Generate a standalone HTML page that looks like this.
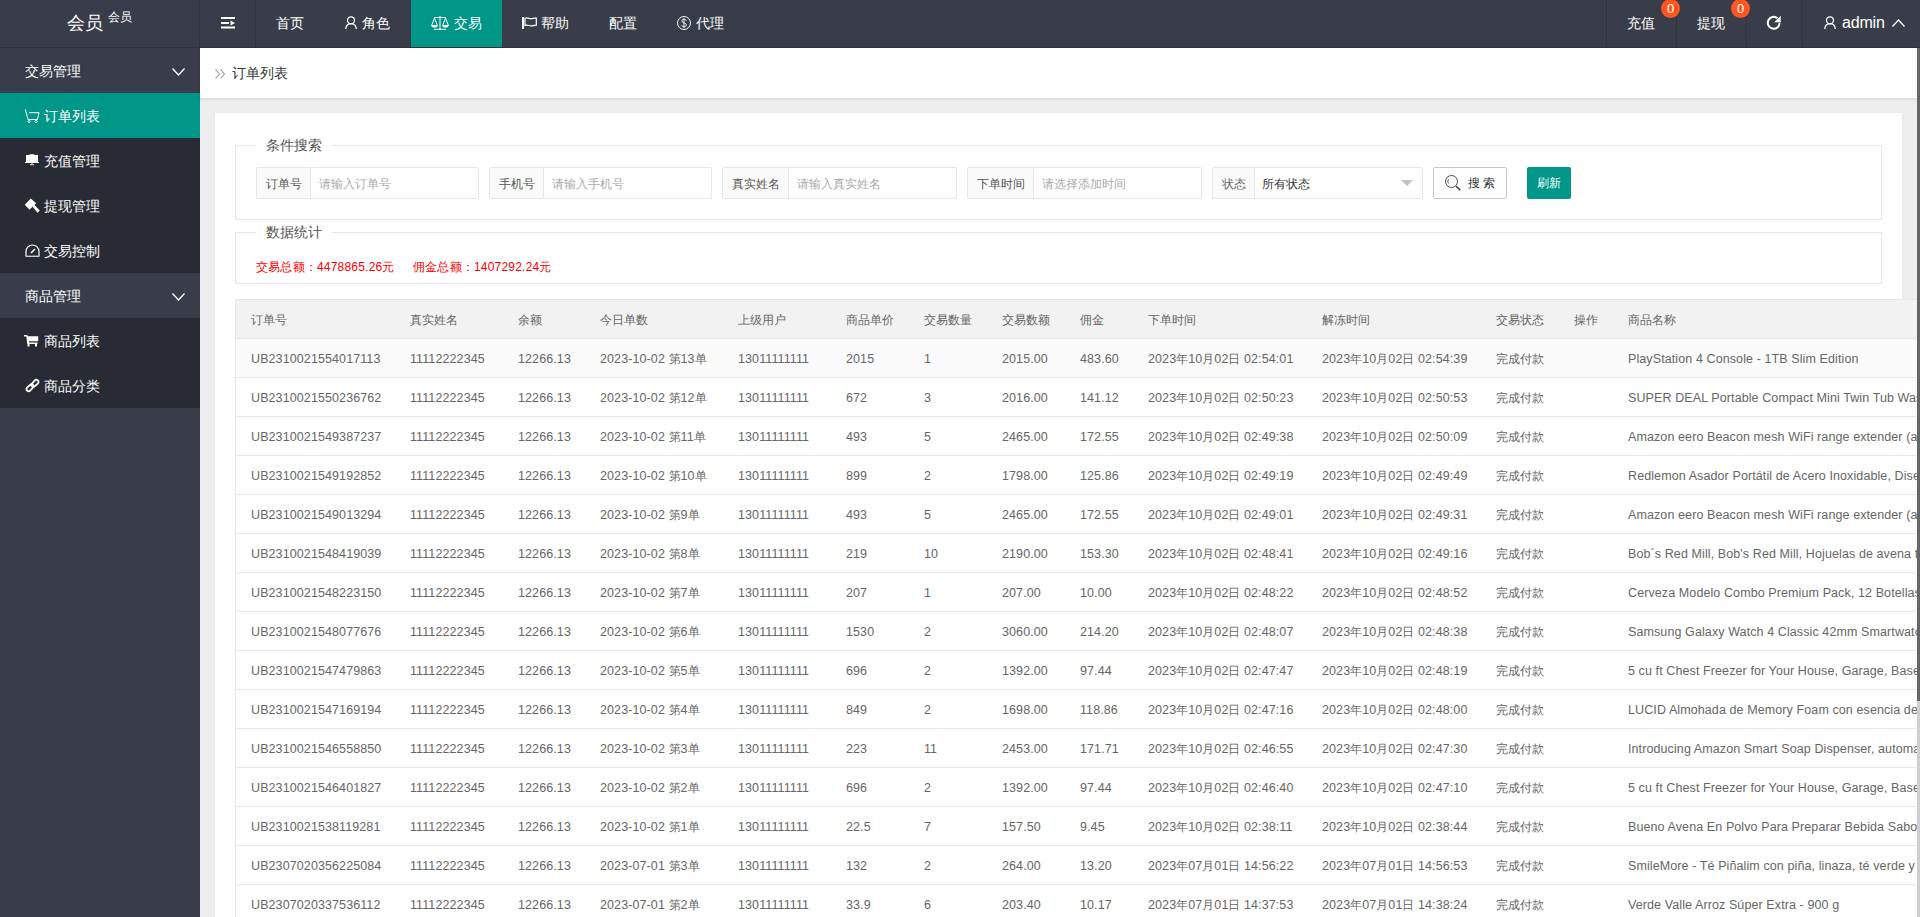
<!DOCTYPE html>
<html><head><meta charset="utf-8">
<style>
*{box-sizing:border-box;margin:0;padding:0}
html,body{width:1920px;height:917px;overflow:hidden}
body{font-family:"Liberation Sans",sans-serif;font-size:14px;color:#666;background:#eee;position:relative}
svg{position:absolute;display:block;overflow:visible}
#hdr{position:absolute;left:0;top:0;width:1920px;height:48px;background:#393D49;color:#fff}
#hdr .bb{position:absolute;left:0;top:47px;width:1920px;height:1px;background:#30333d}
.logo{position:absolute;left:0;top:0;width:200px;height:47px}
.logo .big{position:absolute;left:67px;top:11px;font-size:18px;line-height:24px}
.logo .sm{position:absolute;left:108px;top:9px;font-size:12px;line-height:16px}
.sep{position:absolute;top:0;width:1px;height:47px;background:#30333d}
.nav{position:absolute;top:0;height:48px;line-height:46px;font-size:14px;color:#fff;white-space:nowrap}
.navact{position:absolute;left:411px;top:0;width:91px;height:48px;background:#009688}
.badge{position:absolute;top:-1px;width:19px;height:19px;border-radius:50%;background:#FF5722;color:#fff;font-size:13px;line-height:20px;text-align:center}
#side{position:absolute;left:0;top:48px;width:200px;height:869px;background:#393D49}
.sitem{position:absolute;left:0;width:200px;height:45px;color:#fff;font-size:14px;line-height:45px;white-space:nowrap}
.sitem.child{background:#282B33}
.sitem.act{background:#009688}
.sitem .tx{position:absolute;left:44px;top:1px}
.sitem.grp .tx{left:25px}
#bread{position:absolute;left:200px;top:48px;width:1717px;height:50px;background:#fff;box-shadow:0 1px 3px rgba(0,0,0,.12)}
#bread .tx{position:absolute;left:32px;top:0;line-height:50px;font-size:14px;color:#333}
#card{position:absolute;left:215px;top:113px;width:1687px;height:900px;background:#fff;box-shadow:0 0 2px rgba(0,0,0,.06)}
#rscroll{position:absolute;left:1917px;top:48px;width:3px;height:653px;background:#666}
#rtrack{position:absolute;left:1917px;top:701px;width:3px;height:216px;background:#cfcfcf}
.fs{position:absolute;left:235px;width:1647px;border:1px solid #e6e6e6}
.legend{position:absolute;left:256px;height:20px;padding:0 10px;background:#fff;font-size:14px;line-height:21px;color:#555}
.ig{position:absolute;top:167px;height:32px;border:1px solid #e6e6e6;border-radius:2px;background:#fff}
.ig .lb{position:absolute;left:0;top:0;height:30px;background:#FAFAFA;border-right:1px solid #e6e6e6;font-size:12px;line-height:32px;color:#555;padding-left:9px;white-space:nowrap}
.ig .ph{position:absolute;top:0;line-height:32px;font-size:12px;color:#aaa;white-space:nowrap}
.btn1{position:absolute;left:1433px;top:167px;width:74px;height:32px;border:1px solid #C9C9C9;border-radius:2px;background:#fff;font-size:12px;color:#333;line-height:30px}
.btn2{position:absolute;left:1527px;top:167px;width:44px;height:32px;border-radius:2px;background:#009688;color:#fff;font-size:12px;line-height:32px;text-align:center}
.stat{position:absolute;top:259px;font-size:12px;line-height:16px;color:#FF0000;white-space:nowrap;letter-spacing:.2px}
#tbl{position:absolute;left:235px;top:299px;width:1682px;height:640px;border-left:1px solid #e6e6e6;border-top:1px solid #e6e6e6;overflow:hidden}
.thead{position:absolute;left:0;top:0;width:1700px;height:39px;background:#F2F2F2;border-bottom:1px solid #e6e6e6}
.tr{position:absolute;left:0;width:1700px;height:39px;background:#fff;border-bottom:1px solid #e6e6e6}
.tr.hov{background:#FBFBFB}
.c{position:absolute;top:1px;line-height:38px;font-size:12.5px;letter-spacing:.1px;color:#666;white-space:nowrap}
.c i{font-style:normal;font-size:12px;letter-spacing:0}
.c.h{font-size:12px;letter-spacing:0}
</style></head><body>
<div id="hdr">
  <div class="logo"><span class="big">会员</span><span class="sm">会员</span></div>
  <div class="sep" style="left:199px"></div>
  <div class="sep" style="left:255px"></div>
  <!-- hamburger -->
  <svg style="left:221px;top:16px" width="14" height="13" viewBox="0 0 14 13">
    <rect x="0" y="1" width="14" height="2" fill="#fff"/>
    <rect x="0" y="6" width="8" height="2" fill="#fff"/>
    <path d="M9.5 4.5 L14 7 L9.5 9.5Z" fill="#fff"/>
    <rect x="0" y="10.5" width="14" height="2" fill="#fff"/>
  </svg>
  <div class="navact"></div>
  <div class="nav" style="left:276px">首页</div>
  <svg style="left:345px;top:16px" width="12" height="13" viewBox="0 0 12 13" fill="none" stroke="#fff" stroke-width="1.3">
    <circle cx="6" cy="4.3" r="3.5"/>
    <path d="M0.8 13 C0.8 9.5 3 7.6 6 7.6 C9 7.6 11.2 9.5 11.2 13"/>
  </svg>
  <div class="nav" style="left:362px">角色</div>
  <svg style="left:431px;top:16px" width="18" height="14" viewBox="0 0 18 14" fill="none" stroke="#fff" stroke-width="1">
    <path d="M3 1.5 H15 M9 1.5 V13.3 M3 13.3 H15"/>
    <path d="M3.5 2.2 L0.7 9.2 M3.5 2.2 L6.3 9.2 M14.5 2.2 L11.7 9.2 M14.5 2.2 L17.3 9.2"/>
    <path d="M0.2 9 H6.8 C6.6 11 5.2 11.6 3.5 11.6 C1.8 11.6 0.4 11 0.2 9Z M11.2 9 H17.8 C17.6 11 16.2 11.6 14.5 11.6 C12.8 11.6 11.4 11 11.2 9Z" fill="#fff" stroke="none"/>
    <circle cx="9" cy="1.3" r="1.1" fill="#fff" stroke="none"/>
  </svg>
  <div class="nav" style="left:454px">交易</div>
  <svg style="left:522px;top:17px" width="15" height="12" viewBox="0 0 15 12" fill="none" stroke="#fff" stroke-width="1.2">
    <path d="M1 0 V12" stroke-width="2"/>
    <path d="M3 1.2 C5.5 0.2 7.5 2.2 10 1.6 C11.5 1.3 12.5 0.9 14.3 1 V8.2 C12.5 8.1 11.5 8.5 10 8.8 C7.5 9.4 5.5 7.4 3 8.4Z"/>
  </svg>
  <div class="nav" style="left:541px">帮助</div>
  <div class="nav" style="left:609px">配置</div>
  <svg style="left:677px;top:16px" width="14" height="14" viewBox="0 0 14 14" fill="none" stroke="#fff" stroke-width="1">
    <circle cx="7" cy="7" r="6.5"/>
    <path d="M9.2 4.6 C8.8 3.6 8 3.3 7 3.3 C5.7 3.3 4.9 4 4.9 5 C4.9 7.4 9.3 6.4 9.3 8.9 C9.3 10 8.4 10.7 7 10.7 C5.8 10.7 5 10.2 4.7 9.2"/>
    <path d="M7 2 V12" stroke-width="0.8"/>
  </svg>
  <div class="nav" style="left:696px">代理</div>

  <div class="sep" style="left:1606px"></div>
  <div class="sep" style="left:1676px"></div>
  <div class="sep" style="left:1746px"></div>
  <div class="sep" style="left:1802px"></div>
  <div class="nav" style="left:1627px">充值</div>
  <div class="badge" style="left:1661px">0</div>
  <div class="nav" style="left:1697px">提现</div>
  <div class="badge" style="left:1731px">0</div>
  <svg style="left:1767px;top:16px" width="14" height="14" viewBox="0 0 14 14" fill="none" stroke="#fff" stroke-width="2">
    <path d="M12.6 6.8 A5.9 5.9 0 1 1 10.4 2.2"/>
    <path d="M13.7 -0.2 L13.7 6.3 L7.2 6.3Z" fill="#fff" stroke="none"/>
  </svg>
  <svg style="left:1824px;top:16px" width="12" height="13" viewBox="0 0 12 13" fill="none" stroke="#fff" stroke-width="1.3">
    <circle cx="6" cy="4.3" r="3.5"/>
    <path d="M0.8 13 C0.8 9.5 3 7.6 6 7.6 C9 7.6 11.2 9.5 11.2 13"/>
  </svg>
  <div class="nav" style="left:1842px;font-size:16px;letter-spacing:-.2px;line-height:45px">admin</div>
  <svg style="left:1892px;top:19px" width="13" height="8" viewBox="0 0 13 8" fill="none" stroke="#fff" stroke-width="1.3">
    <path d="M0.5 7.5 L6.5 1 L12.5 7.5"/>
  </svg>
  <div class="bb"></div>
</div>

<div id="side">
  <div class="sitem grp" style="top:0"><span class="tx">交易管理</span>
    <svg style="left:172px;top:20px" width="13" height="8" viewBox="0 0 13 8" fill="none" stroke="#fff" stroke-width="1.3"><path d="M0.5 0.5 L6.5 7 L12.5 0.5"/></svg>
  </div>
  <div class="sitem child act" style="top:45px"><span class="tx">订单列表</span>
    <svg style="left:25px;top:16px" width="15" height="14" viewBox="0 0 15 14" fill="none" stroke="#fff" stroke-width="1">
      <path d="M0.3 0.3 L3 10.5 H12.5 L14 3.7 H4"/>
      <circle cx="4.2" cy="12.5" r="1.1"/><circle cx="11.2" cy="12.5" r="1.1"/>
    </svg>
  </div>
  <div class="sitem child" style="top:90px"><span class="tx">充值管理</span>
    <svg style="left:25px;top:16px" width="14" height="12" viewBox="0 0 14 12">
      <rect x="4.5" y="0" width="5" height="1.2" fill="#ccc"/>
      <rect x="1" y="1" width="12" height="8" fill="#fff"/>
      <rect x="0" y="8" width="14" height="1" fill="#fff"/>
      <path d="M3.5 6.5 L5.5 5.6 L8 5 L10.5 3.6" stroke="#e8dde8" stroke-width="0.6" fill="none"/>
      <rect x="6.5" y="9" width="1" height="1.2" fill="#ddd"/>
      <rect x="5" y="10.2" width="4" height="1" fill="#eee"/>
    </svg>
  </div>
  <div class="sitem child" style="top:135px"><span class="tx">提现管理</span>
    <svg style="left:25px;top:198px;top:15px" width="15" height="15" viewBox="0 0 15 15">
      <path d="M5.8 0.6 L11.2 5.2 L4.4 11.8 L-0.2 6.8Z" fill="#fff"/>
      <path d="M7.2 8.2 L9 6.6 L14.8 12.6 L12.6 14.8Z" fill="#fff"/>
    </svg>
  </div>
  <div class="sitem child" style="top:180px"><span class="tx">交易控制</span>
    <svg style="left:25px;top:16px" width="15" height="13" viewBox="0 0 15 13" fill="none" stroke="#fff" stroke-width="1.2">
      <path d="M1 12 V7.5 A6.5 6.5 0 0 1 14 7.5 V12"/>
      <path d="M0.5 12.3 H14.5" stroke="#ccc" stroke-width="1.4"/>
      <path d="M6 9 L10 5" stroke-width="1.6"/>
    </svg>
  </div>
  <div class="sitem grp" style="top:225px"><span class="tx">商品管理</span>
    <svg style="left:172px;top:20px" width="13" height="8" viewBox="0 0 13 8" fill="none" stroke="#fff" stroke-width="1.3"><path d="M0.5 0.5 L6.5 7 L12.5 0.5"/></svg>
  </div>
  <div class="sitem child" style="top:270px"><span class="tx">商品列表</span>
    <svg style="left:24px;top:17px" width="15" height="12" viewBox="0 0 15 12">
      <path d="M0 0 H3 L4 1.2 H14.2 V6.2 H5 V7.6 H13.5 V9 H3.2 L2.4 1.4 H0Z" fill="#fff"/>
      <rect x="3.5" y="9" width="2" height="2.5" fill="#fff"/><rect x="11" y="9" width="2" height="2.5" fill="#fff"/>
    </svg>
  </div>
  <div class="sitem child" style="top:315px"><span class="tx">商品分类</span>
    <svg style="left:25px;top:15px" width="15" height="15" viewBox="0 0 15 15" fill="none" stroke="#fff" stroke-width="1.8">
      <path d="M6.2 6.5 L9.8 2.3 A2.2 2.2 0 0 1 13 5.3 L9.2 8.7 A2.2 2.2 0 0 1 6.3 6.3"/>
      <path d="M8.8 8.5 L5.2 12.7 A2.2 2.2 0 0 1 2 9.7 L5.8 6.3 A2.2 2.2 0 0 1 8.7 8.7"/>
    </svg>
  </div>
</div>

<div id="bread">
  <svg style="left:15px;top:21px" width="11" height="10" viewBox="0 0 11 10" fill="none" stroke="#999" stroke-width="1.1">
    <path d="M0.5 0.5 L4.5 5 L0.5 9.5 M5.5 0.5 L9.5 5 L5.5 9.5"/>
  </svg>
  <span class="tx">订单列表</span>
</div>
<div id="card"></div>

<div class="fs" style="top:145px;height:75px"></div>
<div class="legend" style="top:135px">条件搜索</div>
<div class="ig" style="left:256px;width:223px"><span class="lb" style="width:54px">订单号</span><span class="ph" style="left:62px">请输入订单号</span></div>
<div class="ig" style="left:489px;width:223px"><span class="lb" style="width:54px">手机号</span><span class="ph" style="left:62px">请输入手机号</span></div>
<div class="ig" style="left:722px;width:235px"><span class="lb" style="width:66px">真实姓名</span><span class="ph" style="left:74px">请输入真实姓名</span></div>
<div class="ig" style="left:967px;width:235px"><span class="lb" style="width:66px">下单时间</span><span class="ph" style="left:74px">请选择添加时间</span></div>
<div class="ig" style="left:1212px;width:211px"><span class="lb" style="width:42px;color:#666">状态</span><span class="ph" style="left:49px;color:#333">所有状态</span>
  <svg style="left:188px;top:12px" width="12" height="6" viewBox="0 0 12 6"><path d="M0 0 H12 L6 6Z" fill="#c2c2c2"/></svg>
</div>
<div class="btn1">
  <svg style="left:11px;top:7px" width="17" height="16" viewBox="0 0 17 16" fill="none" stroke="#333" stroke-width="1">
    <circle cx="6.5" cy="6.5" r="6" stroke-width="0.9"/>
    <path d="M3.6 4.5 A3 3 0 0 0 3.6 8.5" stroke-width="0.8"/>
    <path d="M11.2 11.2 L15.3 15.3" stroke-width="1.5"/>
  </svg>
  <span style="position:absolute;left:34px;top:0;white-space:nowrap">搜 索</span>
</div>
<div class="btn2">刷新</div>

<div class="fs" style="top:232px;height:52px"></div>
<div class="legend" style="top:222px">数据统计</div>
<div class="stat" style="left:256px">交易总额：4478865.26元</div>
<div class="stat" style="left:413px">佣金总额：1407292.24元</div>

<div id="tbl">
<div class="thead"><span class="c h" style="left:15px"><i>订单号</i></span><span class="c h" style="left:174px"><i>真实姓名</i></span><span class="c h" style="left:282px"><i>余额</i></span><span class="c h" style="left:364px"><i>今日单数</i></span><span class="c h" style="left:502px"><i>上级用户</i></span><span class="c h" style="left:610px"><i>商品单价</i></span><span class="c h" style="left:688px"><i>交易数量</i></span><span class="c h" style="left:766px"><i>交易数额</i></span><span class="c h" style="left:844px"><i>佣金</i></span><span class="c h" style="left:912px"><i>下单时间</i></span><span class="c h" style="left:1086px"><i>解冻时间</i></span><span class="c h" style="left:1260px"><i>交易状态</i></span><span class="c h" style="left:1338px"><i>操作</i></span><span class="c h" style="left:1392px"><i>商品名称</i></span></div>
<div class="tr hov" style="top:39px"><span class="c" style="left:15px">UB2310021554017113</span><span class="c" style="left:174px">11112222345</span><span class="c" style="left:282px">12266.13</span><span class="c" style="left:364px">2023-10-02 <i>第</i>13<i>单</i></span><span class="c" style="left:502px">13011111111</span><span class="c" style="left:610px">2015</span><span class="c" style="left:688px">1</span><span class="c" style="left:766px">2015.00</span><span class="c" style="left:844px">483.60</span><span class="c" style="left:912px">2023<i>年</i>10<i>月</i>02<i>日</i> 02:54:01</span><span class="c" style="left:1086px">2023<i>年</i>10<i>月</i>02<i>日</i> 02:54:39</span><span class="c" style="left:1260px"><i>完成付款</i></span><span class="c" style="left:1392px">PlayStation 4 Console - 1TB Slim Edition</span></div>
<div class="tr" style="top:78px"><span class="c" style="left:15px">UB2310021550236762</span><span class="c" style="left:174px">11112222345</span><span class="c" style="left:282px">12266.13</span><span class="c" style="left:364px">2023-10-02 <i>第</i>12<i>单</i></span><span class="c" style="left:502px">13011111111</span><span class="c" style="left:610px">672</span><span class="c" style="left:688px">3</span><span class="c" style="left:766px">2016.00</span><span class="c" style="left:844px">141.12</span><span class="c" style="left:912px">2023<i>年</i>10<i>月</i>02<i>日</i> 02:50:23</span><span class="c" style="left:1086px">2023<i>年</i>10<i>月</i>02<i>日</i> 02:50:53</span><span class="c" style="left:1260px"><i>完成付款</i></span><span class="c" style="left:1392px">SUPER DEAL Portable Compact Mini Twin Tub Washer and Spinner</span></div>
<div class="tr" style="top:117px"><span class="c" style="left:15px">UB2310021549387237</span><span class="c" style="left:174px">11112222345</span><span class="c" style="left:282px">12266.13</span><span class="c" style="left:364px">2023-10-02 <i>第</i>11<i>单</i></span><span class="c" style="left:502px">13011111111</span><span class="c" style="left:610px">493</span><span class="c" style="left:688px">5</span><span class="c" style="left:766px">2465.00</span><span class="c" style="left:844px">172.55</span><span class="c" style="left:912px">2023<i>年</i>10<i>月</i>02<i>日</i> 02:49:38</span><span class="c" style="left:1086px">2023<i>年</i>10<i>月</i>02<i>日</i> 02:50:09</span><span class="c" style="left:1260px"><i>完成付款</i></span><span class="c" style="left:1392px">Amazon eero Beacon mesh WiFi range extender (add-on to eero)</span></div>
<div class="tr" style="top:156px"><span class="c" style="left:15px">UB2310021549192852</span><span class="c" style="left:174px">11112222345</span><span class="c" style="left:282px">12266.13</span><span class="c" style="left:364px">2023-10-02 <i>第</i>10<i>单</i></span><span class="c" style="left:502px">13011111111</span><span class="c" style="left:610px">899</span><span class="c" style="left:688px">2</span><span class="c" style="left:766px">1798.00</span><span class="c" style="left:844px">125.86</span><span class="c" style="left:912px">2023<i>年</i>10<i>月</i>02<i>日</i> 02:49:19</span><span class="c" style="left:1086px">2023<i>年</i>10<i>月</i>02<i>日</i> 02:49:49</span><span class="c" style="left:1260px"><i>完成付款</i></span><span class="c" style="left:1392px">Redlemon Asador Portátil de Acero Inoxidable, Diseño</span></div>
<div class="tr" style="top:195px"><span class="c" style="left:15px">UB2310021549013294</span><span class="c" style="left:174px">11112222345</span><span class="c" style="left:282px">12266.13</span><span class="c" style="left:364px">2023-10-02 <i>第</i>9<i>单</i></span><span class="c" style="left:502px">13011111111</span><span class="c" style="left:610px">493</span><span class="c" style="left:688px">5</span><span class="c" style="left:766px">2465.00</span><span class="c" style="left:844px">172.55</span><span class="c" style="left:912px">2023<i>年</i>10<i>月</i>02<i>日</i> 02:49:01</span><span class="c" style="left:1086px">2023<i>年</i>10<i>月</i>02<i>日</i> 02:49:31</span><span class="c" style="left:1260px"><i>完成付款</i></span><span class="c" style="left:1392px">Amazon eero Beacon mesh WiFi range extender (add-on to eero)</span></div>
<div class="tr" style="top:234px"><span class="c" style="left:15px">UB2310021548419039</span><span class="c" style="left:174px">11112222345</span><span class="c" style="left:282px">12266.13</span><span class="c" style="left:364px">2023-10-02 <i>第</i>8<i>单</i></span><span class="c" style="left:502px">13011111111</span><span class="c" style="left:610px">219</span><span class="c" style="left:688px">10</span><span class="c" style="left:766px">2190.00</span><span class="c" style="left:844px">153.30</span><span class="c" style="left:912px">2023<i>年</i>10<i>月</i>02<i>日</i> 02:48:41</span><span class="c" style="left:1086px">2023<i>年</i>10<i>月</i>02<i>日</i> 02:49:16</span><span class="c" style="left:1260px"><i>完成付款</i></span><span class="c" style="left:1392px">Bob´s Red Mill, Bob&#x27;s Red Mill, Hojuelas de avena tradicionales</span></div>
<div class="tr" style="top:273px"><span class="c" style="left:15px">UB2310021548223150</span><span class="c" style="left:174px">11112222345</span><span class="c" style="left:282px">12266.13</span><span class="c" style="left:364px">2023-10-02 <i>第</i>7<i>单</i></span><span class="c" style="left:502px">13011111111</span><span class="c" style="left:610px">207</span><span class="c" style="left:688px">1</span><span class="c" style="left:766px">207.00</span><span class="c" style="left:844px">10.00</span><span class="c" style="left:912px">2023<i>年</i>10<i>月</i>02<i>日</i> 02:48:22</span><span class="c" style="left:1086px">2023<i>年</i>10<i>月</i>02<i>日</i> 02:48:52</span><span class="c" style="left:1260px"><i>完成付款</i></span><span class="c" style="left:1392px">Cerveza Modelo Combo Premium Pack, 12 Botellas</span></div>
<div class="tr" style="top:312px"><span class="c" style="left:15px">UB2310021548077676</span><span class="c" style="left:174px">11112222345</span><span class="c" style="left:282px">12266.13</span><span class="c" style="left:364px">2023-10-02 <i>第</i>6<i>单</i></span><span class="c" style="left:502px">13011111111</span><span class="c" style="left:610px">1530</span><span class="c" style="left:688px">2</span><span class="c" style="left:766px">3060.00</span><span class="c" style="left:844px">214.20</span><span class="c" style="left:912px">2023<i>年</i>10<i>月</i>02<i>日</i> 02:48:07</span><span class="c" style="left:1086px">2023<i>年</i>10<i>月</i>02<i>日</i> 02:48:38</span><span class="c" style="left:1260px"><i>完成付款</i></span><span class="c" style="left:1392px">Samsung Galaxy Watch 4 Classic 42mm Smartwatch</span></div>
<div class="tr" style="top:351px"><span class="c" style="left:15px">UB2310021547479863</span><span class="c" style="left:174px">11112222345</span><span class="c" style="left:282px">12266.13</span><span class="c" style="left:364px">2023-10-02 <i>第</i>5<i>单</i></span><span class="c" style="left:502px">13011111111</span><span class="c" style="left:610px">696</span><span class="c" style="left:688px">2</span><span class="c" style="left:766px">1392.00</span><span class="c" style="left:844px">97.44</span><span class="c" style="left:912px">2023<i>年</i>10<i>月</i>02<i>日</i> 02:47:47</span><span class="c" style="left:1086px">2023<i>年</i>10<i>月</i>02<i>日</i> 02:48:19</span><span class="c" style="left:1260px"><i>完成付款</i></span><span class="c" style="left:1392px">5 cu ft Chest Freezer for Your House, Garage, Basement</span></div>
<div class="tr" style="top:390px"><span class="c" style="left:15px">UB2310021547169194</span><span class="c" style="left:174px">11112222345</span><span class="c" style="left:282px">12266.13</span><span class="c" style="left:364px">2023-10-02 <i>第</i>4<i>单</i></span><span class="c" style="left:502px">13011111111</span><span class="c" style="left:610px">849</span><span class="c" style="left:688px">2</span><span class="c" style="left:766px">1698.00</span><span class="c" style="left:844px">118.86</span><span class="c" style="left:912px">2023<i>年</i>10<i>月</i>02<i>日</i> 02:47:16</span><span class="c" style="left:1086px">2023<i>年</i>10<i>月</i>02<i>日</i> 02:48:00</span><span class="c" style="left:1260px"><i>完成付款</i></span><span class="c" style="left:1392px">LUCID Almohada de Memory Foam con esencia de lavanda</span></div>
<div class="tr" style="top:429px"><span class="c" style="left:15px">UB2310021546558850</span><span class="c" style="left:174px">11112222345</span><span class="c" style="left:282px">12266.13</span><span class="c" style="left:364px">2023-10-02 <i>第</i>3<i>单</i></span><span class="c" style="left:502px">13011111111</span><span class="c" style="left:610px">223</span><span class="c" style="left:688px">11</span><span class="c" style="left:766px">2453.00</span><span class="c" style="left:844px">171.71</span><span class="c" style="left:912px">2023<i>年</i>10<i>月</i>02<i>日</i> 02:46:55</span><span class="c" style="left:1086px">2023<i>年</i>10<i>月</i>02<i>日</i> 02:47:30</span><span class="c" style="left:1260px"><i>完成付款</i></span><span class="c" style="left:1392px">Introducing Amazon Smart Soap Dispenser, automatic</span></div>
<div class="tr" style="top:468px"><span class="c" style="left:15px">UB2310021546401827</span><span class="c" style="left:174px">11112222345</span><span class="c" style="left:282px">12266.13</span><span class="c" style="left:364px">2023-10-02 <i>第</i>2<i>单</i></span><span class="c" style="left:502px">13011111111</span><span class="c" style="left:610px">696</span><span class="c" style="left:688px">2</span><span class="c" style="left:766px">1392.00</span><span class="c" style="left:844px">97.44</span><span class="c" style="left:912px">2023<i>年</i>10<i>月</i>02<i>日</i> 02:46:40</span><span class="c" style="left:1086px">2023<i>年</i>10<i>月</i>02<i>日</i> 02:47:10</span><span class="c" style="left:1260px"><i>完成付款</i></span><span class="c" style="left:1392px">5 cu ft Chest Freezer for Your House, Garage, Basement</span></div>
<div class="tr" style="top:507px"><span class="c" style="left:15px">UB2310021538119281</span><span class="c" style="left:174px">11112222345</span><span class="c" style="left:282px">12266.13</span><span class="c" style="left:364px">2023-10-02 <i>第</i>1<i>单</i></span><span class="c" style="left:502px">13011111111</span><span class="c" style="left:610px">22.5</span><span class="c" style="left:688px">7</span><span class="c" style="left:766px">157.50</span><span class="c" style="left:844px">9.45</span><span class="c" style="left:912px">2023<i>年</i>10<i>月</i>02<i>日</i> 02:38:11</span><span class="c" style="left:1086px">2023<i>年</i>10<i>月</i>02<i>日</i> 02:38:44</span><span class="c" style="left:1260px"><i>完成付款</i></span><span class="c" style="left:1392px">Bueno Avena En Polvo Para Preparar Bebida Sabor Original</span></div>
<div class="tr" style="top:546px"><span class="c" style="left:15px">UB2307020356225084</span><span class="c" style="left:174px">11112222345</span><span class="c" style="left:282px">12266.13</span><span class="c" style="left:364px">2023-07-01 <i>第</i>3<i>单</i></span><span class="c" style="left:502px">13011111111</span><span class="c" style="left:610px">132</span><span class="c" style="left:688px">2</span><span class="c" style="left:766px">264.00</span><span class="c" style="left:844px">13.20</span><span class="c" style="left:912px">2023<i>年</i>07<i>月</i>01<i>日</i> 14:56:22</span><span class="c" style="left:1086px">2023<i>年</i>07<i>月</i>01<i>日</i> 14:56:53</span><span class="c" style="left:1260px"><i>完成付款</i></span><span class="c" style="left:1392px">SmileMore - Té Piñalim con piña, linaza, té verde y nopal</span></div>
<div class="tr" style="top:585px"><span class="c" style="left:15px">UB2307020337536112</span><span class="c" style="left:174px">11112222345</span><span class="c" style="left:282px">12266.13</span><span class="c" style="left:364px">2023-07-01 <i>第</i>2<i>单</i></span><span class="c" style="left:502px">13011111111</span><span class="c" style="left:610px">33.9</span><span class="c" style="left:688px">6</span><span class="c" style="left:766px">203.40</span><span class="c" style="left:844px">10.17</span><span class="c" style="left:912px">2023<i>年</i>07<i>月</i>01<i>日</i> 14:37:53</span><span class="c" style="left:1086px">2023<i>年</i>07<i>月</i>01<i>日</i> 14:38:24</span><span class="c" style="left:1260px"><i>完成付款</i></span><span class="c" style="left:1392px">Verde Valle Arroz Súper Extra - 900 g</span></div>
</div>

<div id="rscroll"></div>
<div id="rtrack"></div>
</body></html>
